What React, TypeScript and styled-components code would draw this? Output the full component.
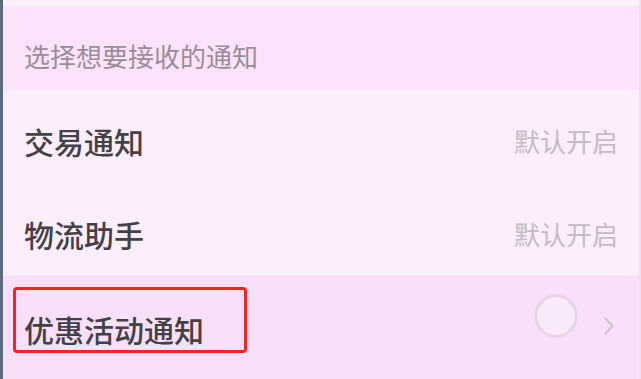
import React from "react";
import styled, { createGlobalStyle } from "styled-components";

const Global = createGlobalStyle`
  html, body { margin: 0; padding: 0; background: #fdeffd; }
  body { font-family: "Noto Sans CJK SC", "Noto Sans", sans-serif; }
`;

const Screen = styled.div`
  width: 641px;
  height: 379px;
  display: flex;
  flex-direction: column;
  box-sizing: border-box;
  border-left: 3px solid #5d6b80;
  border-right: 2px solid #f1dff1;
  overflow: hidden;
  background: #fdeefd;
`;

const TopStrip = styled.div`
  height: 6px;
  background: #fdf0fd;
`;

const SectionHeader = styled.div`
  height: 84px;
  box-sizing: border-box;
  padding: 16px 0 0 21px;
  display: flex;
  align-items: center;
  background: #fbe4fb;
  color: #9a8c9a;
  font-size: 26px;
  line-height: 1;
`;

const Row = styled.div<{ $h: number; $shift: number; $bg: string }>`
  height: ${(p) => p.$h}px;
  box-sizing: border-box;
  padding: ${(p) => p.$shift}px 21px 0 21px;
  display: flex;
  align-items: center;
  justify-content: space-between;
  background: ${(p) => p.$bg};
`;

const Label = styled.span`
  position: relative;
  font-size: 30px;
  line-height: 1;
  color: #454045;
  font-weight: 500;
`;

const Status = styled.span`
  font-size: 26px;
  line-height: 1;
  color: #c6bac6;
`;

const Highlight = styled.span`
  position: absolute;
  left: -11px;
  right: -43px;
  top: -27px;
  bottom: -9px;
  border: 3px solid #ff2020;
  border-radius: 4px;
  pointer-events: none;
`;

const Controls = styled.div`
  display: flex;
  align-items: center;
  gap: 26px;
  margin-top: -26px;
  margin-right: 3px;
`;

const Toggle = styled.span`
  width: 38px;
  height: 38px;
  border-radius: 50%;
  border: 2px solid #e5d3e5;
  background: #fae9fa;
  box-shadow: 0 0 2px rgba(200, 170, 200, 0.4);
`;

const Chevron = styled.svg`
  width: 12px;
  height: 20px;
  margin-top: 20px;
`;

export default function App() {
  return (
    <>
      <Global />
      <Screen>
        <TopStrip />
        <SectionHeader>选择想要接收的通知</SectionHeader>
        <Row $h={96} $shift={5} $bg="#fdeefd">
          <Label>交易通知</Label>
          <Status>默认开启</Status>
        </Row>
        <Row $h={89} $shift={7} $bg="#fdeefd">
          <Label>物流助手</Label>
          <Status>默认开启</Status>
        </Row>
        <Row $h={104} $shift={4} $bg="#f8e0f8">
          <Label>
            优惠活动通知
            <Highlight />
          </Label>
          <Controls>
            <Toggle />
            <Chevron viewBox="0 0 12 20">
              <path d="M2.5 2.5 L9.5 10 L2.5 17.5" fill="none" stroke="#d0c0d0" strokeWidth="2" strokeLinecap="round" strokeLinejoin="round" />
            </Chevron>
          </Controls>
        </Row>
      </Screen>
    </>
  );
}
